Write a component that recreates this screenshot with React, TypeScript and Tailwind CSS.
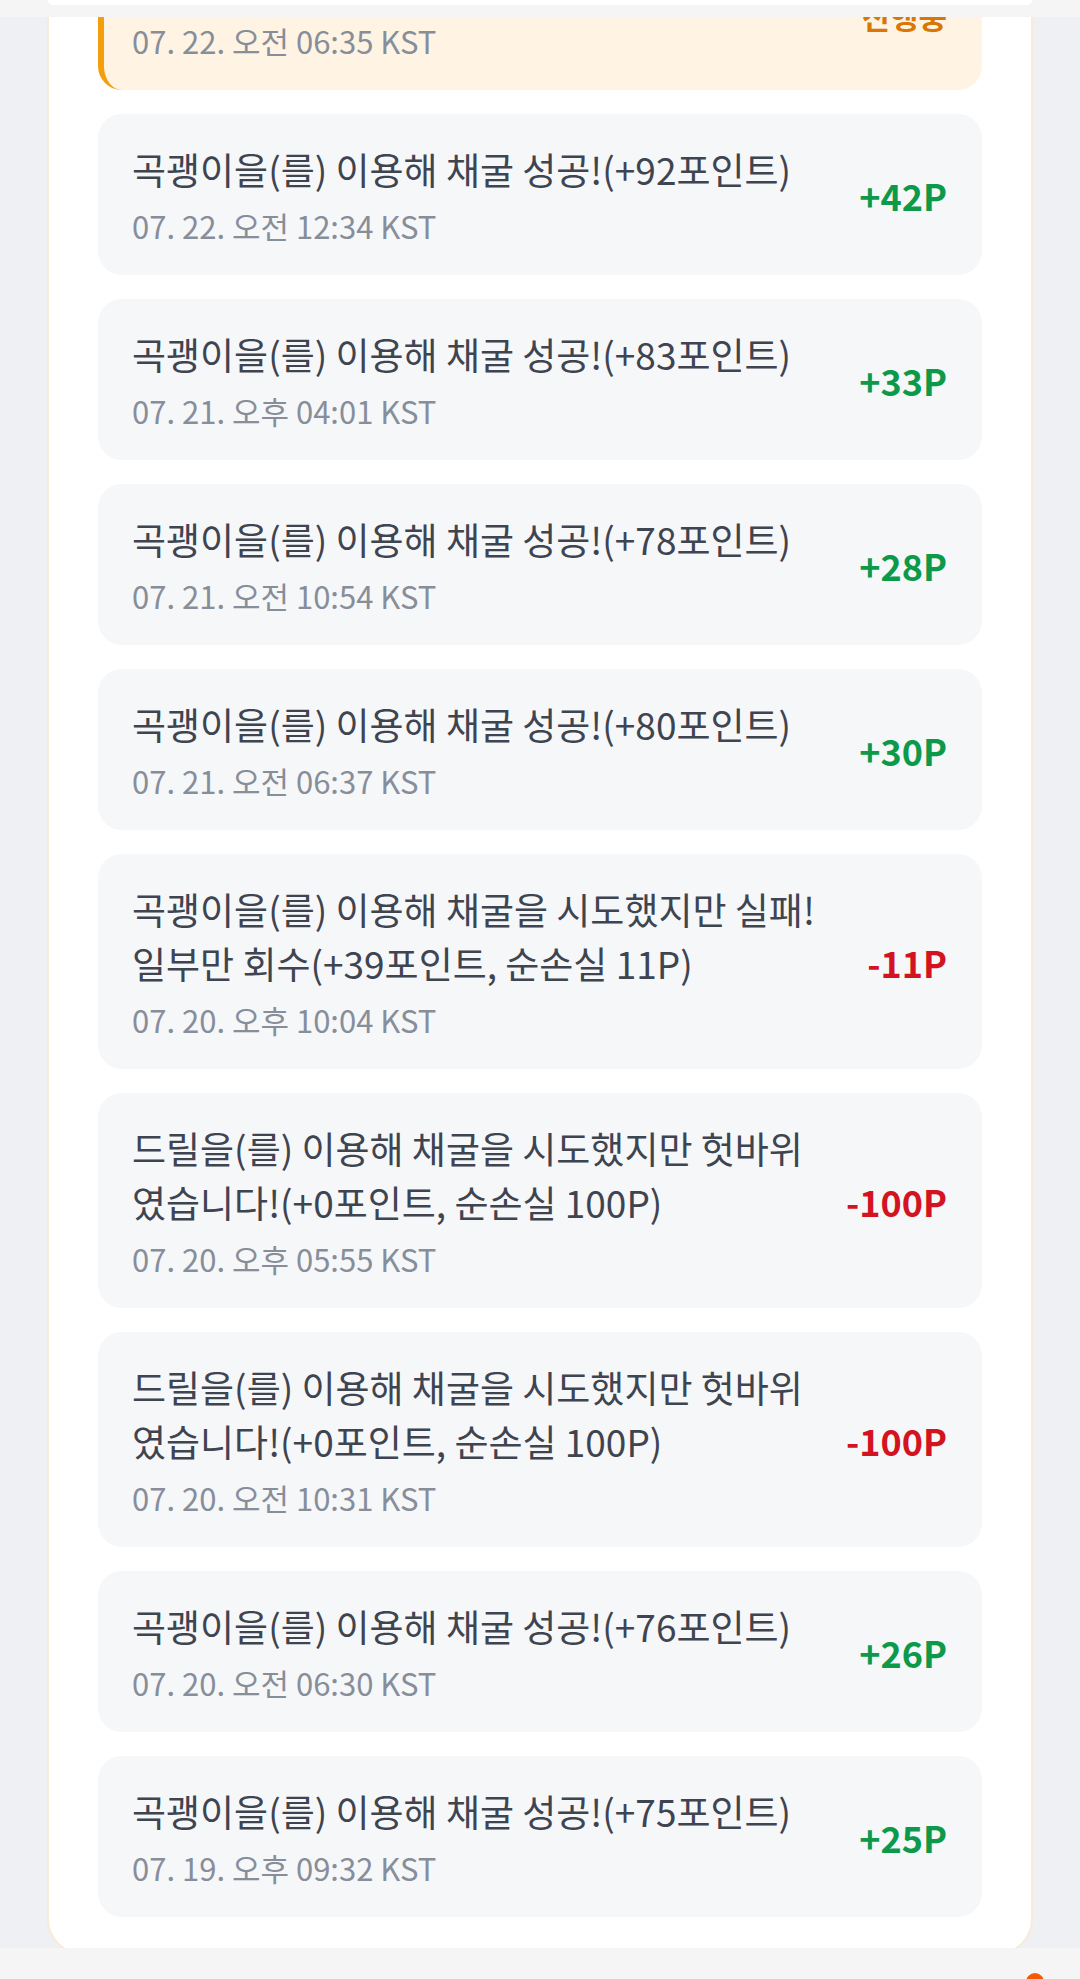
const font = { fontFamily: '"Noto Sans CJK KR", "Noto Sans", sans-serif' };

type Entry = {
  title: string;
  date: string;
  amount: string;
  loss?: boolean;
};

const entries: Entry[] = [
  { title: "곡괭이을(를) 이용해 채굴 성공!(+92포인트)", date: "07. 22. 오전 12:34 KST", amount: "+42P" },
  { title: "곡괭이을(를) 이용해 채굴 성공!(+83포인트)", date: "07. 21. 오후 04:01 KST", amount: "+33P" },
  { title: "곡괭이을(를) 이용해 채굴 성공!(+78포인트)", date: "07. 21. 오전 10:54 KST", amount: "+28P" },
  { title: "곡괭이을(를) 이용해 채굴 성공!(+80포인트)", date: "07. 21. 오전 06:37 KST", amount: "+30P" },
  {
    title: "곡괭이을(를) 이용해 채굴을 시도했지만 실패! 일부만 회수(+39포인트, 순손실 11P)",
    date: "07. 20. 오후 10:04 KST",
    amount: "-11P",
    loss: true,
  },
  {
    title: "드릴을(를) 이용해 채굴을 시도했지만 헛바위였습니다!(+0포인트, 순손실 100P)",
    date: "07. 20. 오후 05:55 KST",
    amount: "-100P",
    loss: true,
  },
  {
    title: "드릴을(를) 이용해 채굴을 시도했지만 헛바위였습니다!(+0포인트, 순손실 100P)",
    date: "07. 20. 오전 10:31 KST",
    amount: "-100P",
    loss: true,
  },
  { title: "곡괭이을(를) 이용해 채굴 성공!(+76포인트)", date: "07. 20. 오전 06:30 KST", amount: "+26P" },
  { title: "곡괭이을(를) 이용해 채굴 성공!(+75포인트)", date: "07. 19. 오후 09:32 KST", amount: "+25P" },
];

function HistoryRow({ entry }: { entry: Entry }) {
  return (
    <div className="flex items-center justify-between rounded-3xl bg-[#f6f7f9] pl-[34px] pr-[35px] pt-[28px] pb-[27px]">
      <div className="max-w-[692px]">
        <p className="text-[37px] leading-[54px] text-[#3e4450]">{entry.title}</p>
        <p className="mt-[8px] text-[31px] leading-[44px] text-[#878e9a]">{entry.date}</p>
      </div>
      <span
        className={
          entry.loss
            ? "shrink-0 text-[36px] font-bold text-[#d3131f]"
            : "shrink-0 text-[36px] font-bold text-[#0c9a4a]"
        }
      >
        {entry.amount}
      </span>
    </div>
  );
}

export default function App() {
  return (
    <div className="relative h-[1979px] overflow-hidden bg-[#eff0f4]" style={font}>
      {/* sticky header edge */}
      <div className="absolute inset-x-0 top-0 z-10 h-[17px] bg-[#f5f5f6]">
        <div className="mx-[48px] h-[5px] rounded-b-[14px] bg-white" />
      </div>

      <div className="mx-[47px] -mt-[122px] rounded-[36px] border-2 border-[#f7ebd9] bg-white px-[49px] pt-[49px] pb-[36px]">
        <div className="flex flex-col gap-6">
          <div className="flex items-center justify-between rounded-3xl border-l-[6px] border-[#f59e0b] bg-[#fff4e4] pl-[28px] pr-[35px] pt-[28px] pb-[27px]">
            <div>
              <p className="text-[37px] leading-[54px] text-[#3e4450]">곡괭이을(를) 이용해 채굴 중</p>
              <p className="mt-[8px] text-[31px] leading-[44px] text-[#878e9a]">07. 22. 오전 06:35 KST</p>
            </div>
            <span className="mt-[12px] shrink-0 text-[31px] font-bold text-[#d97706]">진행중</span>
          </div>
          {entries.map((e, i) => (
            <HistoryRow key={i} entry={e} />
          ))}
        </div>
      </div>

      {/* bottom navigation edge */}
      <div className="absolute inset-x-0 bottom-0 z-10 h-[31px] bg-[#f5f5f6]">
        <div className="absolute left-[1026px] top-[25px] h-[18px] w-[18px] rounded-full bg-[#f25a06]" />
      </div>
    </div>
  );
}
